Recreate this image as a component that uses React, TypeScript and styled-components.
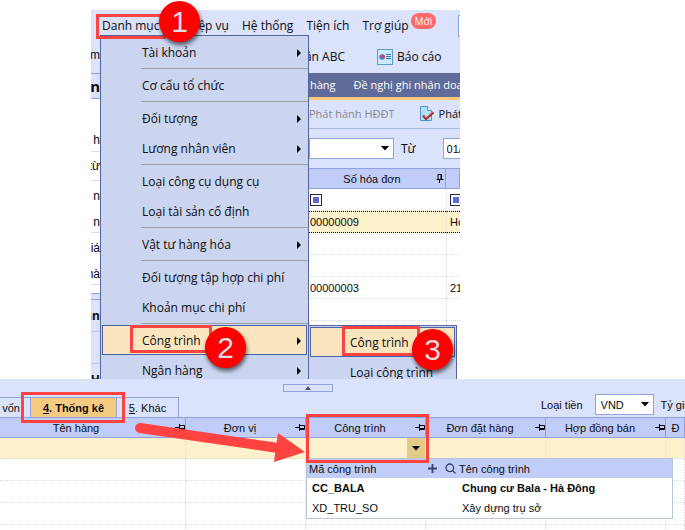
import React from "react";
import styled, { createGlobalStyle, css } from "styled-components";

const ui = '"Open Sans", "Noto Sans", sans-serif';
const classic = '"Liberation Sans", Arial, sans-serif';
const c = {
  pale: "#dae2fc",
  head: "#c1cdf9",
  line: "#8fa1de",
  menu: "#cbd5f0",
  menuLine: "#52659f",
  hover: "#fae5bf",
  yellow: "#fef1cb",
  dots: "#dcdcdc",
  red: "#ff4343",
  tab: "#f6cb81",
};

const Global = createGlobalStyle`
  *, *::before, *::after { box-sizing: border-box; }
  body { margin: 0; background: #fff; color: #0c0c0c; font: 12px/16px ${ui}; overflow: hidden; }
  button, select, input { font: inherit; color: inherit; margin: 0; border-radius: 0; }
`;

const Page = styled.main`
  position: relative;
  padding-top: 10px;
`;

/* ---------- upper window ---------- */
const Window = styled.section`
  position: relative;
  height: 369px;
  margin: 0 225px 0 91px;
  overflow: hidden;
  white-space: nowrap;
`;
const MenuBar = styled.nav`
  display: flex;
  align-items: center;
  height: 27px;
  padding: 5px 0 0 11px;
  gap: 13px;
  background: ${c.pale};
`;
const BarItem = styled.button`
  border: 0;
  padding: 0;
  background: none;
  white-space: nowrap;
`;
const NewBadge = styled.span`
  align-self: flex-start;
  flex: none;
  margin: -2px 0 0 -11px;
  padding: 0 4px;
  border-radius: 8px;
  background: #ff6868;
  color: #fff;
  font-size: 10px;
`;
const SearchBox = styled.input`
  flex: 0 0 60px;
  height: 22px;
  margin-left: 9px;
  border: 1px solid ${c.line};
  background: #fff;
`;
const Columns = styled.div`
  display: grid;
  grid-template-columns: 218px minmax(0, 1fr);
`;
const Side = styled.div`
  display: flex;
  flex-direction: column;
  width: 9px;
`;
const SideCell = styled.div<{ $h: number; $bold?: boolean; $size?: number; $pale?: boolean; $line?: string }>`
  display: flex;
  flex: none;
  align-items: center;
  justify-content: flex-end;
  overflow: hidden;
  height: ${(p) => p.$h}px;
  background: ${(p) => (p.$pale ? c.pale : "#fff")};
  border-bottom: 1px solid ${(p) => p.$line ?? "transparent"};
  font-family: ${(p) => (p.$bold ? ui : classic)};
  font-size: ${(p) => p.$size ?? 12}px;
  font-weight: ${(p) => (p.$bold ? 700 : 400)};
`;
const Row = styled.div<{ $h: number }>`
  display: flex;
  align-items: center;
  height: ${(p) => p.$h}px;
  background: ${c.pale};
  overflow: hidden;
`;
const ToolButton = styled.button`
  display: flex;
  align-items: center;
  flex: none;
  gap: 4px;
  padding: 0;
  border: 0;
  background: none;
  white-space: nowrap;
  &:disabled { color: #858893; }
`;
const ClippedTool = styled(ToolButton)`
  justify-content: flex-end;
  width: 36px;
  overflow: hidden;
`;
const ToolRow = styled(Row)`
  gap: 32px;
  padding-top: 4px;
`;
const TabRow = styled(Row)`
  gap: 18px;
  padding-left: 1px;
  background: #5f6c9a;
  border-bottom: 3px solid #fac97c;
  color: #fff;
  font-size: 11px;
`;
const ActionRow = styled(Row)`
  gap: 24px;
  border-bottom: 1px solid #a9b9ee;
  font-size: 11px;
`;
const FilterRow = styled(Row)`
  gap: 7px;
`;
const DateInput = styled.input`
  flex: 0 0 80px;
  margin-left: 20px;
  height: 21px;
  padding: 0 3px;
  border: 1px solid ${c.line};
  background: #fff;
  font: 11px/16px ${classic};
`;

const Combo = styled.span<{ $w: number }>`
  position: relative;
  display: flex;
  flex: none;
  width: ${(p) => p.$w}px;
  height: 21px;
  svg { position: absolute; right: 5px; top: 8px; pointer-events: none; }
`;
const Select = styled.select`
  width: 100%;
  padding: 0 5px;
  border: 1px solid ${c.line};
  background: #fff;
  appearance: none;
`;

const InvoiceTable = styled.table`
  width: 100%;
  table-layout: fixed;
  border-collapse: separate;
  border-spacing: 0;
  font: 11px/16px ${classic};
  td { height: 22px; padding: 0 1px; border-bottom: 1px dotted ${c.dots}; overflow: hidden; }
  td + td { border-left: 1px dotted ${c.dots}; padding-left: 3px; }
`;
const HeadCell = styled.th`
  height: 21px;
  padding: 0 0 0 1px;
  background: ${c.head};
  border: solid ${c.line};
  border-width: 1px 1px 1px 0;
  font: 11px/16px ${classic};
`;
const HeadInner = styled.span<{ $shift?: number }>`
  display: flex;
  align-items: center;
  justify-content: space-between;
  gap: 2px;
  span { flex: 1; text-align: center; white-space: nowrap; padding-right: ${(p) => p.$shift ?? 0}px; }
`;
const PickedRow = styled.tr`
  background: ${c.yellow};
  && td { border-top: 1px dotted #000; border-bottom: 1px dotted #000; }
`;
const FilterMark = styled.button`
  display: block;
  width: 12px;
  height: 12px;
  padding: 0;
  border: 1px solid #24244f;
  background: #6468cd;
  box-shadow: inset 0 0 0 2px #fff;
`;

/* ---------- drop-down menus ---------- */
const Menu = styled.ul<{ $sub?: boolean }>`
  position: absolute;
  left: ${(p) => (p.$sub ? 217 : 9)}px;
  top: ${(p) => (p.$sub ? 315 : 25)}px;
  width: ${(p) => (p.$sub ? 149 : 209)}px;
  margin: 0;
  padding: 1px;
  list-style: none;
  background: ${c.menu};
  border: 1px solid ${c.menuLine};
`;
const MenuItem = styled.li<{ $divided?: boolean }>`
  ${(p) =>
    p.$divided &&
    css`
      &::after {
        content: "";
        display: block;
        height: 1px;
        margin: 1px -1px 1px 39px;
        background: #a0a1a6;
      }
    `}
`;
const MenuButton = styled.button<{ $on?: boolean }>`
  display: flex;
  align-items: center;
  justify-content: space-between;
  width: 100%;
  height: 30px;
  padding: 1px 5px 0 39px;
  border: 1px solid ${(p) => (p.$on ? "#4a62a8" : "transparent")};
  background: ${(p) => (p.$on ? c.hover : "transparent")};
  white-space: nowrap;
`;

/* ---------- lower panel ---------- */
const Panel = styled.section`
  background: ${c.pale};
  font: 11px/16px ${classic};
  white-space: nowrap;
`;
const CollapseRow = styled.div`
  display: flex;
  justify-content: center;
  height: 13px;
  padding: 5px 69px 0 0;
`;
const Collapse = styled.button`
  display: grid;
  place-items: center;
  width: 50px;
  height: 8px;
  padding: 0;
  border: 1px solid ${c.line};
  background: ${c.pale};
`;
const TabsBar = styled.div`
  display: flex;
  justify-content: space-between;
  height: 25px;
`;
const Tabs = styled.div`
  display: flex;
  align-self: flex-end;
`;
const Tab = styled.button<{ $on?: boolean; $w: number }>`
  width: ${(p) => p.$w}px;
  height: 20px;
  padding: 0;
  border: solid ${c.line};
  border-width: 1px 1px 0 0;
  background: ${(p) => (p.$on ? c.tab : c.pale)};
  font-weight: ${(p) => (p.$on ? 700 : 400)};
`;
const FirstTab = styled(Tab)`
  padding-right: 8px;
`;
const Currency = styled.div`
  display: flex;
  align-items: center;
  gap: 12px;
  flex: 0 0 144px;
  overflow: hidden;
`;
const Rate = styled.span`
  margin-left: -5px;
`;
const DetailTable = styled.table`
  width: 100%;
  min-width: 685px;
  table-layout: fixed;
  border-collapse: separate;
  border-spacing: 0;
  background: #fff;
  td { height: 22px; padding: 0; border-bottom: 1px dotted ${c.dots}; border-right: 1px dotted ${c.dots}; }
`;
const EditRow = styled.tr`
  background: ${c.yellow};
  > td { position: relative; height: 21px; }
`;
const DropButton = styled.button`
  display: grid;
  place-items: center;
  width: 18px;
  height: 20px;
  margin-left: auto;
  padding: 0;
  border: 0;
  background: #e3cc88;
`;
const Lookup = styled.div`
  position: absolute;
  left: 0;
  top: 20px;
  z-index: 1;
  width: 367px;
  border: 1px solid #b7c5da;
  background: #fff;
`;
const LookupTable = styled.table`
  width: 100%;
  table-layout: fixed;
  border-collapse: collapse;
  && th { height: 19px; padding: 0 2px; background: ${c.head}; font-weight: 400; text-align: left; }
  && td { height: 20px; padding: 0 5px; border: 0; }
`;
const StrongRow = styled.tr`
  font-weight: 700;
`;
const LookupHead = styled.span`
  display: flex;
  align-items: center;
  justify-content: space-between;
`;
const NameHead = styled(LookupHead)`
  justify-content: flex-start;
  gap: 3px;
  margin-left: -14px;
`;

/* ---------- annotations ---------- */
const Outline = styled.div<{ $x: number; $y: number; $w: number; $h: number }>`
  position: absolute;
  left: ${(p) => p.$x}px;
  top: ${(p) => p.$y}px;
  width: ${(p) => p.$w}px;
  height: ${(p) => p.$h}px;
  border: 3px solid ${c.red};
  z-index: 2;
  pointer-events: none;
`;
const Step = styled.div<{ $x: number; $y: number }>`
  position: absolute;
  left: ${(p) => p.$x}px;
  top: ${(p) => p.$y}px;
  display: grid;
  place-items: center;
  width: 41px;
  height: 41px;
  border-radius: 50%;
  background: #fe0000;
  color: #e2dfe2;
  font: 30px/41px ${classic};
  box-shadow: 1px 3px 4px rgba(0, 0, 0, 0.6);
  z-index: 3;
`;
const Arrow = styled.svg`
  position: absolute;
  left: 130px;
  top: 418px;
  z-index: 2;
  pointer-events: none;
`;

const Right = () => (
  <svg width="4" height="8" viewBox="0 0 4 8" aria-hidden="true">
    <path d="M0 0L4 4L0 8Z" fill="#000" />
  </svg>
);
const Down = () => (
  <svg width="8" height="5" viewBox="0 0 8 5" aria-hidden="true">
    <path d="M0 0H8L4 4.500Z" fill="#000" />
  </svg>
);
const PinDown = () => (
  <svg width="9" height="9" viewBox="0 0 9 9" fill="none" stroke="#000" aria-hidden="true">
    <path d="M2 5V.5H5.500V5M5 .5V5M.5 5.500H7.500M3.500 6V9" />
  </svg>
);
const PinSide = () => (
  <svg width="10" height="7" viewBox="0 0 10 7" fill="none" stroke="#000" aria-hidden="true">
    <path d="M0 3.500H4M4.500 0V7M5 1.500H9.500V5.500H5M5 4.500H9" />
  </svg>
);
const ReportIcon = () => (
  <svg width="16" height="16" viewBox="0 0 16 16" aria-hidden="true">
    <rect x=".5" y=".5" width="15" height="15" fill="#c9ebfd" stroke="#5b9bd0" />
    <circle cx="5" cy="8" r="2.800" fill="#4c7ed0" />
    <path d="M5 8V5.200A2.800 2.800 0 0 1 7.800 8A2.800 2.800 0 0 1 6.500 10.300Z" fill="#d8443c" />
    <path d="M9 5.500H14M9 7.500H14M9 9.500H14" stroke="#3f78b8" />
  </svg>
);
const IssueIcon = () => (
  <svg width="16" height="16" viewBox="0 0 16 16" aria-hidden="true">
    <path d="M1.500 .5H8.500L12.500 4.500V14.500H1.500Z" fill="#b4ddf7" stroke="#4f94cc" />
    <path d="M8.500 .5V4.500H12.500" fill="#eef8ff" stroke="#4f94cc" />
    <path d="M4 9.500L7 13L14.500 6.500" fill="none" stroke="#a3282c" strokeWidth="2.200" />
    <path d="M4 8.500L7 12L14 5.500" fill="none" stroke="#ef6a62" />
  </svg>
);

const menuItems: { text: string; arrow?: boolean; divided?: boolean; on?: boolean }[] = [
  { text: "Tài khoản", arrow: true, divided: true },
  { text: "Cơ cấu tổ chức", divided: true },
  { text: "Đối tượng", arrow: true },
  { text: "Lương nhân viên", arrow: true, divided: true },
  { text: "Loại công cụ dụng cụ" },
  { text: "Loại tài sản cố định", divided: true },
  { text: "Vật tư hàng hóa", arrow: true, divided: true },
  { text: "Đối tượng tập hợp chi phí" },
  { text: "Khoản mục chi phí", divided: true },
  { text: "Công trình", arrow: true, on: true },
  { text: "Ngân hàng", arrow: true },
];

const invoices = [
  ["", ""],
  ["", ""],
  ["00000003", "21"],
  ["", ""],
  ["", ""],
  ["", ""],
  ["", ""],
];

const detailColumns = ["Tên hàng", "Đơn vị", "Công trình", "Đơn đặt hàng", "Hợp đồng bán"];

export default function App() {
  return (
    <Page>
      <Global />
      <Window>
        <MenuBar>
          <BarItem>Danh mục</BarItem>
          <BarItem>Nghiệp vụ</BarItem>
          <BarItem>Hệ thống</BarItem>
          <BarItem>Tiện ích</BarItem>
          <BarItem>Trợ giúp</BarItem>
          <NewBadge>Mới</NewBadge>
          <SearchBox aria-label="Tìm kiếm" />
        </MenuBar>
        <Columns>
          <Side>
            <SideCell $h={37} $pale $line={c.line}>âm</SideCell>
            <SideCell $h={25} $pale $bold $size={15} $line={c.line}>n</SideCell>
            <SideCell $h={30} />
            <SideCell $h={23} $line={c.dots}>h</SideCell>
            <SideCell $h={29} $line={c.dots}>từ</SideCell>
            <SideCell $h={30}>n</SideCell>
            <SideCell $h={22} $line={c.dots}>n</SideCell>
            <SideCell $h={30}>iá</SideCell>
            <SideCell $h={22} $line={c.dots}>hà</SideCell>
            <SideCell $h={9} $line={c.line} />
            <SideCell $h={6} $pale $line={c.line} />
            <SideCell $h={32} $pale $bold $line="#b9c6f0">àn</SideCell>
            <SideCell $h={32} $pale $line="#b9c6f0" />
            <SideCell $h={32} $pale $bold>H</SideCell>
          </Side>
          <div>
            <ToolRow $h={36}>
              <ClippedTool>ân ABC</ClippedTool>
              <ToolButton><ReportIcon />Báo cáo</ToolButton>
            </ToolRow>
            <TabRow $h={27}>
              <span>hàng</span>
              <span>Đề nghị ghi nhận doanh thu</span>
            </TabRow>
            <ActionRow $h={29}>
              <ToolButton disabled>Phát hành HĐĐT</ToolButton>
              <ToolButton><IssueIcon />Phát hành</ToolButton>
            </ActionRow>
            <FilterRow $h={39}>
              <Combo $w={85}>
                <Select aria-label="Kỳ"><option></option></Select>
                <Down />
              </Combo>
              <label htmlFor="from">Từ</label>
              <DateInput id="from" defaultValue="01/01/2022" />
            </FilterRow>
            <InvoiceTable>
              <colgroup><col width="137" /><col /></colgroup>
              <thead>
                <tr>
                  <HeadCell><HeadInner><span>Số hóa đơn</span><PinDown /></HeadInner></HeadCell>
                  <HeadCell />
                </tr>
              </thead>
              <tbody>
                <tr>
                  <td><FilterMark aria-label="Lọc số hóa đơn" /></td>
                  <td><FilterMark aria-label="Lọc" /></td>
                </tr>
                <PickedRow><td>00000009</td><td>Hóa</td></PickedRow>
                {invoices.map((r, i) => (
                  <tr key={i}><td>{r[0]}</td><td>{r[1]}</td></tr>
                ))}
              </tbody>
            </InvoiceTable>
          </div>
        </Columns>
        <Menu>
          {menuItems.map((m) => (
            <MenuItem key={m.text} $divided={m.divided}>
              <MenuButton $on={m.on}>{m.text}{m.arrow && <Right />}</MenuButton>
            </MenuItem>
          ))}
        </Menu>
        <Menu $sub>
          <MenuItem><MenuButton $on>Công trình</MenuButton></MenuItem>
          <MenuItem><MenuButton>Loại công trình</MenuButton></MenuItem>
        </Menu>
      </Window>

      <Panel>
        <CollapseRow>
          <Collapse aria-label="Thu gọn">
            <svg width="6" height="4" viewBox="0 0 6 4" aria-hidden="true"><path d="M3 0L6 4H0Z" fill="#555" /></svg>
          </Collapse>
        </CollapseRow>
        <TabsBar>
          <Tabs>
            <FirstTab $w={31}>vốn</FirstTab>
            <Tab $w={86} $on><u>4</u>. Thống kê</Tab>
            <Tab $w={62}><u>5</u>. Khác</Tab>
          </Tabs>
          <Currency>
            <label htmlFor="currency">Loại tiền</label>
            <Combo $w={59}>
              <Select id="currency"><option>VND</option></Select>
              <Down />
            </Combo>
            <Rate>Tỷ giá</Rate>
          </Currency>
        </TabsBar>
        <DetailTable>
          <colgroup>
            <col /><col width="120" /><col width="120" /><col width="120" /><col width="120" /><col width="19" />
          </colgroup>
          <thead>
            <tr>
              {detailColumns.map((t, i) => (
                <HeadCell key={t}>
                  <HeadInner $shift={i === 0 ? 22 : 0}><span>{t}</span><PinSide /></HeadInner>
                </HeadCell>
              ))}
              <HeadCell>Đ</HeadCell>
            </tr>
          </thead>
          <tbody>
            <EditRow>
              <td /><td />
              <td>
                <DropButton aria-label="Chọn công trình"><Down /></DropButton>
                <Lookup>
                  <LookupTable>
                    <colgroup><col width="150" /><col /></colgroup>
                    <thead>
                      <tr>
                        <th>
                          <LookupHead>
                            Mã công trình
                            <svg width="28" height="11" viewBox="0 0 28 11" fill="none" stroke="#33446f" strokeWidth="1.800" aria-hidden="true">
                              <path d="M5.500 1V10M1 5.500H10" />
                            </svg>
                          </LookupHead>
                        </th>
                        <th>
                          <NameHead>
                            <svg width="11" height="11" viewBox="0 0 11 11" fill="none" stroke="#33446f" strokeWidth="1.300" aria-hidden="true">
                              <circle cx="4.800" cy="4.800" r="3.800" /><path d="M7.500 7.500L10.500 10.500" />
                            </svg>
                            Tên công trình
                          </NameHead>
                        </th>
                      </tr>
                    </thead>
                    <tbody>
                      <StrongRow><td>CC_BALA</td><td>Chung cư Bala - Hà Đông</td></StrongRow>
                      <tr><td>XD_TRU_SO</td><td>Xây dựng trụ sở</td></tr>
                    </tbody>
                  </LookupTable>
                </Lookup>
              </td>
              <td /><td /><td />
            </EditRow>
            {[0, 1, 2, 3].map((r) => (
              <tr key={r}>{[0, 1, 2, 3, 4, 5].map((k) => <td key={k} />)}</tr>
            ))}
          </tbody>
        </DetailTable>
      </Panel>

      <Outline $x={96} $y={14} $w={70} $h={25} />
      <Outline $x={130} $y={325} $w={82} $h={28} />
      <Outline $x={342} $y={326} $w={78} $h={30} />
      <Outline $x={21} $y={392} $w={104} $h={31} />
      <Outline $x={306} $y={414} $w={123} $h={49} />
      <Arrow width="180" height="50" viewBox="0 0 180 50" aria-hidden="true">
        <path d="M10 10L148 30" stroke={c.red} strokeWidth="10" strokeLinecap="round" />
        <path d="M148 15L175 34L144 44Z" fill={c.red} />
      </Arrow>
      <Step $x={159} $y={1}>1</Step>
      <Step $x={205} $y={327}>2</Step>
      <Step $x={412} $y={329}>3</Step>
    </Page>
  );
}
